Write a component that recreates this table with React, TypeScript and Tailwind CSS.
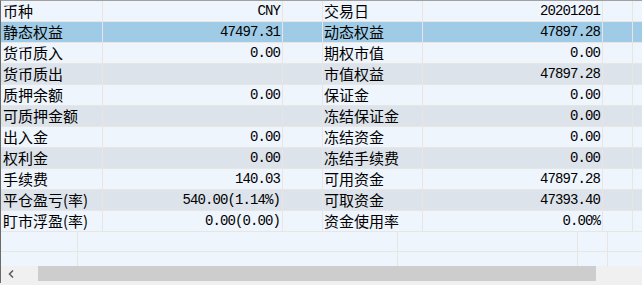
import React from "react";

const rows: [string, string, string, string][] = [
  ["币种", "CNY", "交易日", "20201201"],
  ["静态权益", "47497.31", "动态权益", "47897.28"],
  ["货币质入", "0.00", "期权市值", "0.00"],
  ["货币质出", "", "市值权益", "47897.28"],
  ["质押余额", "0.00", "保证金", "0.00"],
  ["可质押金额", "", "冻结保证金", "0.00"],
  ["出入金", "0.00", "冻结资金", "0.00"],
  ["权利金", "0.00", "冻结手续费", "0.00"],
  ["手续费", "140.03", "可用资金", "47897.28"],
  ["平仓盈亏(率)", "540.00(1.14%)", "可取资金", "47393.40"],
  ["盯市浮盈(率)", "0.00(0.00)", "资金使用率", "0.00%"],
];

const cjk = { fontFamily: '"Noto Sans CJK SC", sans-serif' };
const mono = { fontFamily: '"Liberation Mono", monospace', letterSpacing: "-0.9px" };

function Row({ r, i }: { r: [string, string, string, string]; i: number }) {
  const bg =
    i === 1 ? "bg-[#9fcbe6]" : i % 2 === 1 ? "bg-[#dde3ea]" : "bg-[#eef5fd]";
  return (
    <div className={`flex h-[21px] border-b border-[#e8e6e3] ${bg}`}>
      <div
        className="w-[102px] shrink-0 border-r border-[#e8e6e3] pl-[2px] flex items-center text-[15px] leading-[20px] text-black whitespace-nowrap"
        style={cjk}
      >
        {r[0]}
      </div>
      <div
        className="w-[180px] shrink-0 border-r border-[#e8e6e3] pr-[2px] flex items-center justify-end text-[14px] leading-[20px] text-black whitespace-nowrap"
        style={mono}
      >
        {r[1]}
      </div>
      <div className="w-[40px] shrink-0 border-r border-[#e8e6e3]" />
      <div
        className="w-[100px] shrink-0 border-r border-[#e8e6e3] pl-[1px] flex items-center text-[15px] leading-[20px] text-black whitespace-nowrap"
        style={cjk}
      >
        {r[2]}
      </div>
      <div
        className="w-[180px] shrink-0 border-r border-[#e8e6e3] pr-[2px] flex items-center justify-end text-[14px] leading-[20px] text-black whitespace-nowrap"
        style={mono}
      >
        {r[3]}
      </div>
      <div className="w-[30px] shrink-0 border-r border-[#e8e6e3]" />
      <div className="flex-1" />
    </div>
  );
}

function EmptyRow({ h }: { h: string }) {
  return (
    <div className={`flex ${h} border-b border-[#e8e6e3] bg-[#eef5fd]`}>
      <div className="w-[77px] shrink-0 border-r border-[#e8e6e3]" />
      <div className="w-[320px] shrink-0 border-r border-[#e8e6e3]" />
      <div className="w-[180px] shrink-0 border-r border-[#e8e6e3]" />
      <div className="w-[30px] shrink-0 border-r border-[#e8e6e3]" />
      <div className="flex-1" />
    </div>
  );
}

export default function App() {
  return (
    <div className="w-[642px] h-[285px] bg-[#f0f0f0] overflow-hidden">
      <div className="w-[642px] border-t border-[#a0a0a0] border-l border-l-[#6a6a6a] bg-[#eef5fd]">
        {rows.map((r, i) => (
          <Row key={i} r={r} i={i} />
        ))}
        <div className="border-l border-l-[#6a6a6a] -ml-px">
          <EmptyRow h="h-[20px]" />
          <div className="flex h-[14px] bg-[#eef5fd]">
            <div className="w-[77px] shrink-0 border-r border-[#e8e6e3]" />
            <div className="w-[320px] shrink-0 border-r border-[#e8e6e3]" />
            <div className="w-[180px] shrink-0 border-r border-[#e8e6e3]" />
            <div className="w-[30px] shrink-0 border-r border-[#e8e6e3]" />
            <div className="flex-1" />
          </div>
          <div className="flex h-[15px] bg-[#f0f0f0]">
            <div className="w-[37px] shrink-0 flex items-center pl-[7px]">
              <svg width="6" height="8" viewBox="0 0 6 8">
                <path d="M5 0.5 L1.5 4 L5 7.5" stroke="#606060" strokeWidth="1.6" fill="none" />
              </svg>
            </div>
            <div className="w-[558px] shrink-0 bg-[#cdcdcd]" />
            <div className="flex-1" />
          </div>
          <div className="h-[2px] bg-[#f0f0f0]" />
        </div>
      </div>
    </div>
  );
}
